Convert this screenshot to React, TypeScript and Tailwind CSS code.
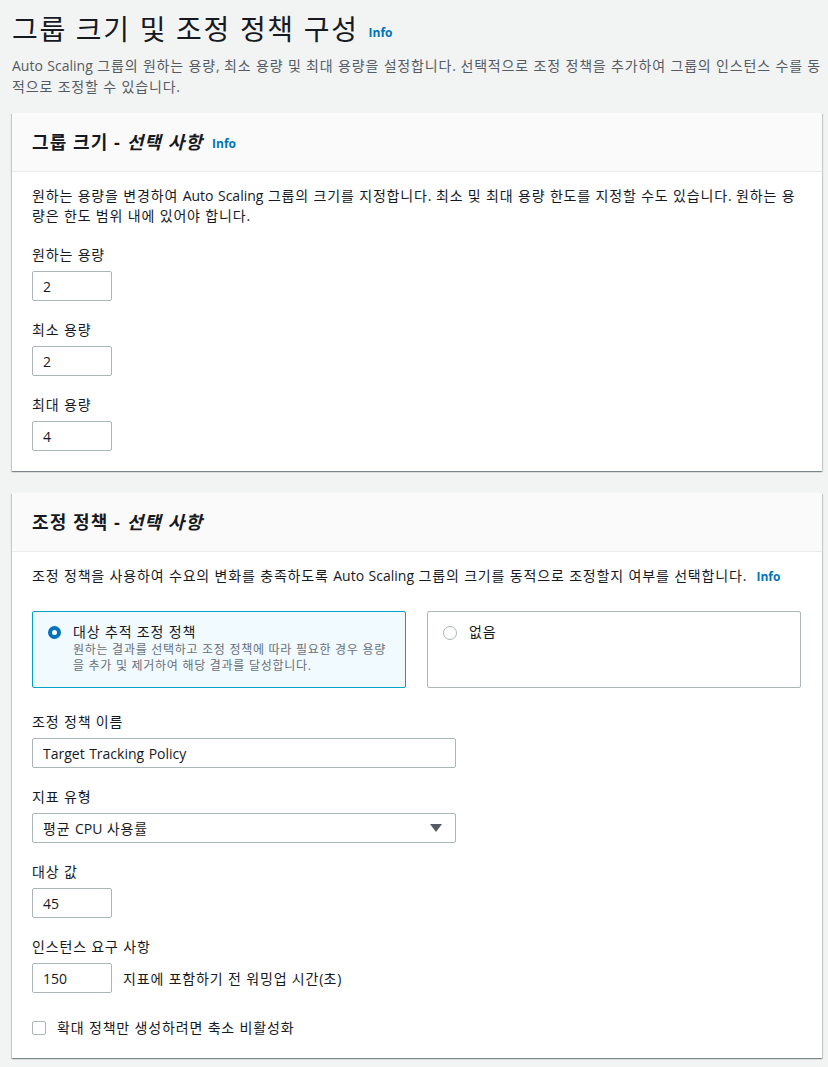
import { ReactNode } from 'react';

const font = { fontFamily: '"Open Sans", "Noto Sans CJK KR", sans-serif' };

// Hangul in the screenshot runs a little wider than Noto Sans CJK, so pad only the non-Latin runs.
function ko(text: string) {
  return text.split(/([A-Za-z0-9().,]+)/).map((part, i) =>
    /^[A-Za-z0-9().,]+$/.test(part) ? (
      <span key={i}>{part}</span>
    ) : (
      <span key={i} className="tracking-[0.06em]">
        {part}
      </span>
    ),
  );
}

function Info({ className = '' }: { className?: string }) {
  return <span className={`text-[12px] font-bold text-[#0073bb] ${className}`}>Info</span>;
}

function Card({ title, info, children }: { title: ReactNode; info?: boolean; children: ReactNode }) {
  return (
    <section className="bg-white shadow-[0_1px_1px_0_rgba(0,28,36,0.3),1px_1px_1px_0_rgba(0,28,36,0.15),-1px_1px_1px_0_rgba(0,28,36,0.15)]">
      <div className="flex h-[59px] items-center border-b border-[#eaeded] bg-[#fafafa] px-5">
        <h2 className="text-[18px] font-bold leading-[24px] text-[#16191f]">{title}</h2>
        {info ? <Info className="ml-[9px] mt-[3px]" /> : null}
      </div>
      <div className="px-5 pt-[14px] pb-5">{children}</div>
    </section>
  );
}

function Field({ label, children, className = '' }: { label: string; children: ReactNode; className?: string }) {
  return (
    <div className={className}>
      <div className="text-[14px] leading-[22px] text-[#16191f]">{ko(label)}</div>
      <div className="mt-[5px]">{children}</div>
    </div>
  );
}

function TextBox({ value, width = 'w-[80px]' }: { value: string; width?: string }) {
  return (
    <div className={`flex h-[30px] items-center rounded-[2px] border border-[#aab7b8] bg-white px-[10px] text-[14px] text-[#16191f] ${width}`}>
      <span>{ko(value)}</span>
    </div>
  );
}

export default function App() {
  return (
    <div style={font} className="min-h-[1067px] bg-[#f2f3f3] pl-3 pr-[6px] pt-[10px]">
      <div className="flex items-end">
        <h1 className="text-[28px] font-normal leading-[38px] text-[#16191f]">{ko('그룹 크기 및 조정 정책 구성')}</h1>
        <Info className="mb-[6px] ml-[10px]" />
      </div>
      <p className="mt-[7px] text-[14px] leading-[21px] text-[#545b64]">
        {ko('Auto Scaling 그룹의 원하는 용량, 최소 용량 및 최대 용량을 설정합니다. 선택적으로 조정 정책을 추가하여 그룹의 인스턴스 수를 동적으로 조정할 수 있습니다.')}
      </p>

      <div className="mt-[16px] flex flex-col gap-[22px]">
        <Card
          info
          title={
            <>
              {ko('그룹 크기 - ')}
              <i>{ko('선택 사항')}</i>
            </>
          }
        >
          <p className="text-[14px] leading-[20px] text-[#16191f]">
            {ko('원하는 용량을 변경하여 Auto Scaling 그룹의 크기를 지정합니다. 최소 및 최대 용량 한도를 지정할 수도 있습니다. 원하는 용량은 한도 범위 내에 있어야 합니다.')}
          </p>
          <Field label="원하는 용량" className="mt-[18px]">
            <TextBox value="2" />
          </Field>
          <Field label="최소 용량" className="mt-[18px]">
            <TextBox value="2" />
          </Field>
          <Field label="최대 용량" className="mt-[18px]">
            <TextBox value="4" />
          </Field>
        </Card>

        <Card
          title={
            <>
              {ko('조정 정책 - ')}
              <i>{ko('선택 사항')}</i>
            </>
          }
        >
          <p className="text-[14px] leading-[20px] text-[#16191f]">
            {ko('조정 정책을 사용하여 수요의 변화를 충족하도록 Auto Scaling 그룹의 크기를 동적으로 조정할지 여부를 선택합니다.')}
            <Info className="ml-[10px]" />
          </p>

          <div className="mt-[24px] grid grid-cols-2 gap-[21px] pr-[1px]">
            <div className="h-[77px] rounded-[2px] border border-[#00a1c9] bg-[#f1faff] px-[15px] pt-[10px]">
              <div className="flex items-start gap-[12px]">
                <span className="mt-[4px] h-[13px] w-[13px] shrink-0 rounded-full border-[4px] border-[#0073bb] bg-white" />
                <div>
                  <div className="text-[14px] leading-[20px] text-[#16191f]">{ko('대상 추적 조정 정책')}</div>
                  <div className="text-[12px] leading-[16px] text-[#687078]">
                    {ko('원하는 결과를 선택하고 조정 정책에 따라 필요한 경우 용량을 추가 및 제거하여 해당 결과를 달성합니다.')}
                  </div>
                </div>
              </div>
            </div>
            <div className="h-[77px] rounded-[2px] border border-[#aab7b8] bg-white px-[15px] pt-[10px]">
              <div className="flex items-start gap-[12px]">
                <span className="mt-[4px] h-[14px] w-[14px] shrink-0 rounded-full border border-[#aab7b8] bg-white" />
                <div className="text-[14px] leading-[20px] text-[#16191f]">{ko('없음')}</div>
              </div>
            </div>
          </div>

          <Field label="조정 정책 이름" className="mt-[23px]">
            <TextBox value="Target Tracking Policy" width="w-[424px]" />
          </Field>
          <Field label="지표 유형" className="mt-[18px]">
            <div className="flex h-[30px] w-[424px] items-center justify-between rounded-[2px] border border-[#aab7b8] bg-white pl-[10px] pr-[13px] text-[14px] text-[#16191f]">
              <span>{ko('평균 CPU 사용률')}</span>
              <svg width="12" height="8" viewBox="0 0 12 8">
                <path d="M0 0 H12 L6 8 Z" fill="#545b64" />
              </svg>
            </div>
          </Field>
          <Field label="대상 값" className="mt-[18px]">
            <TextBox value="45" />
          </Field>
          <Field label="인스턴스 요구 사항" className="mt-[18px]">
            <div className="flex items-center gap-[11px]">
              <TextBox value="150" />
              <span className="text-[14px] text-[#16191f]">{ko('지표에 포함하기 전 워밍업 시간(초)')}</span>
            </div>
          </Field>
          <label className="mt-[25px] flex items-center gap-[11px] text-[14px] leading-[20px] text-[#16191f]">
            <span className="h-[14px] w-[14px] rounded-[2px] border border-[#aab7b8] bg-white" />
            <span>{ko('확대 정책만 생성하려면 축소 비활성화')}</span>
          </label>
        </Card>
      </div>
    </div>
  );
}
